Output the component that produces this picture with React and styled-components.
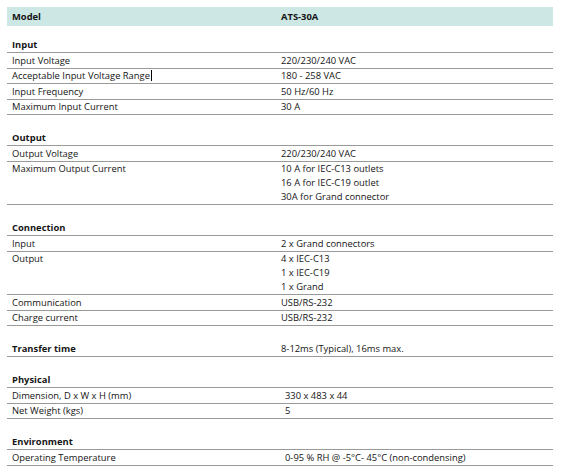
import React from "react";
import styled, { createGlobalStyle } from "styled-components";

const GlobalStyle = createGlobalStyle`
  html, body {
    margin: 0;
    padding: 0;
    background: #ffffff;
  }
  body {
    font-family: "Open Sans", "Liberation Sans", sans-serif;
    color: #151515;
  }
`;

const sections = [
  {
    title: "Input",
    rows: [
      ["Input Voltage", ["220/230/240 VAC"]],
      ["Acceptable Input Voltage Range", ["180 - 258 VAC"], true],
      ["Input Frequency", ["50 Hz/60 Hz"]],
      ["Maximum Input Current", ["30 A"]],
    ],
  },
  {
    title: "Output",
    rows: [
      ["Output Voltage", ["220/230/240 VAC"]],
      [
        "Maximum Output Current",
        ["10 A for IEC-C13 outlets", "16 A for IEC-C19 outlet", "30A for Grand connector"],
      ],
    ],
  },
  {
    title: "Connection",
    rows: [
      ["Input", ["2 x Grand connectors"]],
      ["Output", ["4 x IEC-C13", "1 x IEC-C19", "1 x Grand"]],
      ["Communication", ["USB/RS-232"]],
      ["Charge current", ["USB/RS-232"]],
    ],
  },
  {
    title: "Transfer time",
    value: "8-12ms (Typical), 16ms max.",
    rows: [],
  },
  {
    title: "Physical",
    indent: true,
    rows: [
      ["Dimension, D x W x H (mm)", ["330 x 483 x 44"]],
      ["Net Weight (kgs)", ["5"]],
    ],
  },
  {
    title: "Environment",
    indent: true,
    rows: [["Operating Temperature", ["0-95 % RH @ -5°C- 45°C (non-condensing)"]]],
  },
];

const Page = styled.div`
  padding: 7px 0 0 7px;
  width: 546px;
`;

const HeaderBar = styled.div`
  display: grid;
  grid-template-columns: 269px 1fr;
  height: 19px;
  align-items: center;
  background: #cde7e4;
  font-size: 9.4px;
  font-weight: 700;
`;

const Section = styled.div`
  margin-top: ${(p) => (p.$first ? "11.5px" : "15.5px")};
`;

const Row = styled.div`
  display: grid;
  grid-template-columns: 269px 1fr;
  border-bottom: 1px solid #9a9a9a;
  padding: 0.5px 0 0 0;
  font-size: 9.4px;
  line-height: 14px;
  font-weight: ${(p) => (p.$heading ? 700 : 400)};
`;

const Cell = styled.div`
  padding-left: ${(p) => (p.$indent ? "9px" : "5px")};
  white-space: nowrap;
  font-weight: ${(p) => (p.$plain ? 400 : "inherit")};
`;

const Line = styled.div`
  height: 14px;
`;

const Caret = styled.span`
  display: inline-block;
  width: 0;
  height: 11px;
  border-left: 1px solid #000;
  margin-left: 1px;
  vertical-align: -2px;
`;

export default function App() {
  return (
    <>
      <GlobalStyle />
      <Page>
        <HeaderBar>
          <Cell>Model</Cell>
          <Cell>ATS-30A</Cell>
        </HeaderBar>
        {sections.map((section, i) => (
          <Section key={section.title} $first={i === 0}>
            <Row $heading>
              <Cell>{section.title}</Cell>
              <Cell $plain>{section.value || ""}</Cell>
            </Row>
            {section.rows.map(([label, values, caret]) => (
              <Row key={label}>
                <Cell>
                  {label}
                  {caret ? <Caret /> : null}
                </Cell>
                <Cell $indent={section.indent}>
                  {values.map((v) => (
                    <Line key={v}>{v}</Line>
                  ))}
                </Cell>
              </Row>
            ))}
          </Section>
        ))}
      </Page>
    </>
  );
}
